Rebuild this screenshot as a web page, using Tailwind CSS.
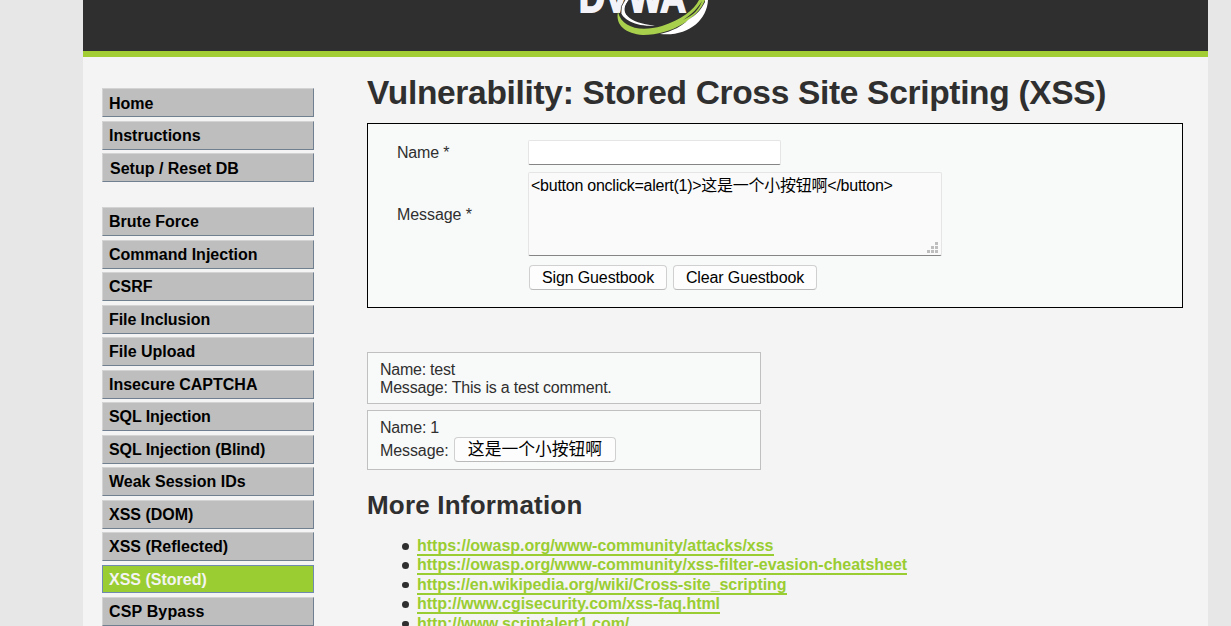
<!DOCTYPE html>
<html lang="en">
<head>
  <meta charset="UTF-8" />
  <meta name="viewport" content="width=device-width, initial-scale=1.0" />
  <title>Vulnerability: Stored Cross Site Scripting (XSS)</title>
  <script src="https://cdn.jsdelivr.net/npm/@tailwindcss/browser@4"></script>
</head>
<body class="h-[626px] overflow-hidden bg-[#e7e7e7] text-[16px] leading-[18px] text-[#2f2f2f] font-['Liberation_Sans','Noto_Sans_CJK_SC',sans-serif]">

  <div class="ml-[83px] w-[1125px] h-[626px] overflow-hidden bg-[#f4f4f4]">

    <header class="h-[57px] bg-[#2f2f2f] border-b-[6px] border-[#a2cd33]">
      <svg class="ml-[477px] block" width="170" height="51" viewBox="0 0 170 51">
        <text x="19" y="12" font-size="42" font-weight="bold" fill="#f4f4f8" stroke="#f4f4f8" stroke-width="2" textLength="107" lengthAdjust="spacingAndGlyphs">DVWA</text>
        <path d="M69 0C58 12 68 23 95 25.500C76 27.500 58 18 61 8Q62 3 65 0Z" fill="#fff" />
        <path d="M65 0Q60 6 61 13M69 0Q63 8 67 15" fill="none" stroke="#2f2f2f" stroke-width=".8" />
        <path d="M58 12C62 28 80 32 102 26C121 20 134 10 139 0H145C138 18 112 35 83 35C66 34 55 25 58 12Z" fill="#a8d04d" />
        <path d="M123 20C132 14 138 8 142 1C139 9 134 15 123 20Z" fill="#2f2f2f" />
        <path d="M148 0C147 21 127 37 100 34C113 31 122 26 128 20C136 15 141 10 145 2V0Z" fill="#fff" />
      </svg>
    </header>

    <div class="flex">
      <nav class="ml-[19px] mt-[31px] w-[212px] shrink-0 font-bold text-black">
        <ul class="flex flex-col gap-[3.5px]">
          <li class="h-[29px] border border-t-[#d3d3d3] border-l-[#d3d3d3] border-r-[#708090] border-b-[#708090] bg-[#bebebe] pl-1.5 pt-1.5">Home</li>
          <li class="h-[29px] border border-t-[#d3d3d3] border-l-[#d3d3d3] border-r-[#708090] border-b-[#708090] bg-[#bebebe] pl-1.5 pt-[5px]">Instructions</li>
          <li class="h-[29px] border border-t-[#d3d3d3] border-l-[#d3d3d3] border-r-[#708090] border-b-[#708090] bg-[#bebebe] pl-[7px] pt-1.5">Setup / Reset DB</li>
        </ul>
        <ul class="mt-[25px] flex flex-col gap-[3.5px]">
          <li class="h-[29px] border border-t-[#d3d3d3] border-l-[#d3d3d3] border-r-[#708090] border-b-[#708090] bg-[#bebebe] pl-1.5 pt-[5px]">Brute Force</li>
          <li class="h-[29px] border border-t-[#d3d3d3] border-l-[#d3d3d3] border-r-[#708090] border-b-[#708090] bg-[#bebebe] pl-1.5 pt-[5px]">Command Injection</li>
          <li class="h-[29px] border border-t-[#d3d3d3] border-l-[#d3d3d3] border-r-[#708090] border-b-[#708090] bg-[#bebebe] pl-1.5 pt-[5px]">CSRF</li>
          <li class="h-[29px] border border-t-[#d3d3d3] border-l-[#d3d3d3] border-r-[#708090] border-b-[#708090] bg-[#bebebe] pl-1.5 pt-[5px] tracking-[-0.08px]">File Inclusion</li>
          <li class="h-[29px] border border-t-[#d3d3d3] border-l-[#d3d3d3] border-r-[#708090] border-b-[#708090] bg-[#bebebe] pl-1.5 pt-[5px]">File Upload</li>
          <li class="h-[29px] border border-t-[#d3d3d3] border-l-[#d3d3d3] border-r-[#708090] border-b-[#708090] bg-[#bebebe] pl-1.5 pt-[5px]">Insecure CAPTCHA</li>
          <li class="h-[29px] border border-t-[#d3d3d3] border-l-[#d3d3d3] border-r-[#708090] border-b-[#708090] bg-[#bebebe] pl-1.5 pt-[5px] tracking-[-0.08px]">SQL Injection</li>
          <li class="h-[29px] border border-t-[#d3d3d3] border-l-[#d3d3d3] border-r-[#708090] border-b-[#708090] bg-[#bebebe] pl-1.5 pt-[5px] tracking-[-0.08px]">SQL Injection (Blind)</li>
          <li class="h-[29px] border border-t-[#d3d3d3] border-l-[#d3d3d3] border-r-[#708090] border-b-[#708090] bg-[#bebebe] pl-1.5 pt-[5px]">Weak Session IDs</li>
          <li class="h-[29px] border border-t-[#d3d3d3] border-l-[#d3d3d3] border-r-[#708090] border-b-[#708090] bg-[#bebebe] pl-1.5 pt-[5px]">XSS (DOM)</li>
          <li class="h-[29px] border border-t-[#d3d3d3] border-l-[#d3d3d3] border-r-[#708090] border-b-[#708090] bg-[#bebebe] pl-1.5 pt-[5px]">XSS (Reflected)</li>
          <li class="h-[28px] mb-px border border-[#7089ae] bg-[#9acd32] pl-1.5 pt-[5px] text-[#f4f4f4]">XSS (Stored)</li>
          <li class="h-[29px] border border-t-[#d3d3d3] border-l-[#d3d3d3] border-r-[#708090] border-b-[#708090] bg-[#bebebe] pl-1.5 pt-[5px] tracking-[0.15px]">CSP Bypass</li>
        </ul>
      </nav>

      <main class="ml-[53px] w-[816px]">
        <h1 class="mt-4 h-[50px] text-[33.5px] leading-[40px] tracking-[-0.32px] font-bold whitespace-nowrap">Vulnerability: Stored Cross Site Scripting (XSS)</h1>

        <form class="h-[185px] border border-black bg-[#f8faf9] pl-[29px] pt-4">
          <div class="flex">
            <label for="name" class="w-[131px] pt-1 tracking-[-0.2px]">Name *</label>
            <input id="name" type="text" class="h-[25px] w-[253px] rounded-xs border border-[#e5e5e5] border-b-[#858585] bg-white px-[3px]" />
          </div>
          <div class="mt-[7px] flex">
            <label for="message" class="w-[131px] pt-[34px] tracking-[-0.07px]">Message *</label>
            <div class="relative">
              <textarea id="message" class="block h-[84px] w-[414px] resize-none rounded-xs border border-[#e5e5e5] border-b-[#858585] bg-[#fafafa] px-0.5 py-1 leading-[18px] tracking-[-0.25px] text-black">&lt;button onclick=alert(1)&gt;这是一个小按钮啊&lt;/button&gt;</textarea>
              <svg class="absolute right-1 bottom-[3px]" width="11" height="11" fill="#bebebe">
                <path d="M8 0h3v3h-3zM4 4h3v3h-3zM8 4h3v3h-3zM0 8h3v3h-3zM4 8h3v3h-3zM8 8h3v3h-3z" />
              </svg>
            </div>
          </div>
          <div class="ml-[132px] mt-[9px] flex gap-1.5 text-black tracking-[-0.13px]">
            <button type="button" class="h-[25px] w-[138px] rounded border border-[#d0d0d0] border-b-[#bababa] bg-[#fdfdfd]">Sign Guestbook</button>
            <button type="button" class="h-[25px] w-[144px] rounded border border-[#d0d0d0] border-b-[#bababa] bg-[#fdfdfd]">Clear Guestbook</button>
          </div>
        </form>

        <div class="mt-11 h-[52px] w-[394px] border border-[#c0c0c0] bg-[#f8faf9] pl-3 pt-2">
          <p class="tracking-[-0.25px]">Name: test</p>
          <p class="tracking-[-0.2px]">Message: This is a test comment.</p>
        </div>
        <div class="mt-1.5 h-[60px] w-[394px] border border-[#c0c0c0] bg-[#f8faf9] pl-3 pt-2">
          <p class="tracking-[-0.2px]">Name: 1</p>
          <div class="flex">
            <span class="w-[74px] pt-[5px] tracking-[-0.1px]">Message:</span>
            <button type="button" class="h-[25px] w-[162px] rounded border border-[#d0d0d0] border-b-[#bababa] bg-[#fdfdfd] text-[16.8px] text-black">这是一个小按钮啊</button>
          </div>
        </div>

        <h2 class="mt-5 text-[26px] leading-[30px] tracking-[0.2px] font-bold">More Information</h2>

        <ul class="mt-4 pl-[50px] leading-[19.4px]">
          <li class="relative before:absolute before:left-[-15px] before:top-[7px] before:size-[6.5px] before:rounded-full before:bg-[#2f2f2f]"><a href="#" class="border-b-2 border-[#9acd32] font-bold text-[#9acd32]">https://owasp.org/www-community/attacks/xss</a></li>
          <li class="relative before:absolute before:left-[-15px] before:top-[7px] before:size-[6.5px] before:rounded-full before:bg-[#2f2f2f]"><a href="#" class="border-b-2 border-[#9acd32] font-bold text-[#9acd32] tracking-[-0.01px]">https://owasp.org/www-community/xss-filter-evasion-cheatsheet</a></li>
          <li class="relative before:absolute before:left-[-15px] before:top-[7px] before:size-[6.5px] before:rounded-full before:bg-[#2f2f2f]"><a href="#" class="border-b-2 border-[#9acd32] font-bold text-[#9acd32] tracking-[-0.06px]">https://en.wikipedia.org/wiki/Cross-site_scripting</a></li>
          <li class="relative before:absolute before:left-[-15px] before:top-[7px] before:size-[6.5px] before:rounded-full before:bg-[#2f2f2f]"><a href="#" class="border-b-2 border-[#9acd32] font-bold text-[#9acd32] tracking-[-0.05px]">http://www.cgisecurity.com/xss-faq.html</a></li>
          <li class="relative before:absolute before:left-[-15px] before:top-[7px] before:size-[6.5px] before:rounded-full before:bg-[#2f2f2f]"><a href="#" class="border-b-2 border-[#9acd32] font-bold text-[#9acd32] tracking-[-0.05px]">http://www.scriptalert1.com/</a></li>
        </ul>
      </main>
    </div>
  </div>

</body>
</html>
